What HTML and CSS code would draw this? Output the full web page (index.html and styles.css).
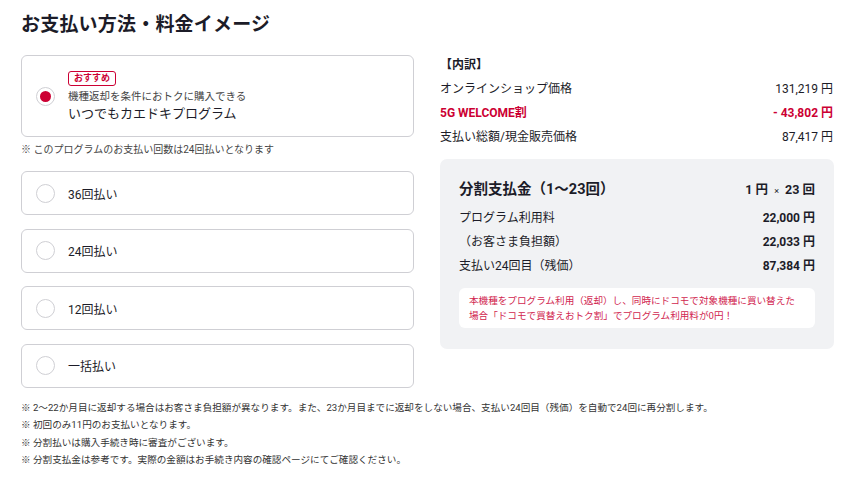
FILE: index.html
```html
<!DOCTYPE html>
<html lang="ja">
<head>
<meta charset="utf-8">
<link rel="stylesheet" href="styles.css">
</head>
<body>
<div class="page">
  <h1 class="title">お支払い方法・料金イメージ</h1>
  <div class="cols">
    <div class="left">
      <div class="card card-main">
        <span class="radio checked"></span>
        <div class="card-body">
          <span class="badge">おすすめ</span>
          <div class="sub">機種返却を条件におトクに購入できる</div>
          <div class="main-label">いつでもカエドキプログラム</div>
        </div>
      </div>
      <p class="note-small">※ このプログラムのお支払い回数は24回払いとなります</p>
      <div class="card card-opt"><span class="radio"></span><span class="opt-label">36回払い</span></div>
      <div class="card card-opt"><span class="radio"></span><span class="opt-label">24回払い</span></div>
      <div class="card card-opt"><span class="radio"></span><span class="opt-label">12回払い</span></div>
      <div class="card card-opt"><span class="radio"></span><span class="opt-label">一括払い</span></div>
    </div>
    <div class="right">
      <div class="breakdown-title">【内訳】</div>
      <div class="row"><span>オンラインショップ価格</span><span>131,219 円</span></div>
      <div class="row red"><span class="b">5G WELCOME割</span><span class="b">- 43,802 円</span></div>
      <div class="row"><span>支払い総額/現金販売価格</span><span>87,417 円</span></div>
      <div class="box">
        <div class="box-head"><span>分割支払金（1〜23回）</span><span class="per">1 円 <span class="x">×</span> 23 回</span></div>
        <div class="brow"><span>プログラム利用料</span><span class="b">22,000 円</span></div>
        <div class="brow"><span>（お客さま負担額）</span><span class="b">22,033 円</span></div>
        <div class="brow"><span>支払い24回目（残価）</span><span class="b">87,384 円</span></div>
        <div class="promo">本機種をプログラム利用（返却）し、同時にドコモで対象機種に買い替えた<br>場合「ドコモで買替えおトク割」でプログラム利用料が0円！</div>
      </div>
    </div>
  </div>
  <ul class="notes">
    <li>※ 2〜22か月目に返却する場合はお客さま負担額が異なります。また、23か月目までに返却をしない場合、支払い24回目（残価）を自動で24回に再分割します。</li>
    <li>※ 初回のみ11円のお支払いとなります。</li>
    <li>※ 分割払いは購入手続き時に審査がございます。</li>
    <li>※ 分割支払金は参考です。実際の金額はお手続き内容の確認ページにてご確認ください。</li>
  </ul>
</div>
</body>
</html>
```
FILE: styles.css
```css
* { box-sizing: border-box; }
body {
  margin: 0;
  background: #fff;
  color: #1c1c28;
  font-family: Roboto, "Noto Sans CJK JP", sans-serif;
}
.page { padding: 12px 21px 0 21px; width: 858px; }
.title {
  margin: 0;
  font-size: 19px;
  font-weight: 700;
  line-height: 26px;
  letter-spacing: 0.2px;
}
.cols {
  display: flex;
  gap: 26px;
  margin-top: 17px;
}
.left { width: 393px; }
.right { width: 394px; }
.card {
  border: 1px solid #cfcfd4;
  border-radius: 6px;
  display: flex;
  align-items: center;
  padding-left: 14px;
  background: #fff;
}
.card-main { height: 82px; }
.card-opt { height: 44px; margin-top: 13.5px; }
.note-small + .card-opt { margin-top: 13px; }
.radio {
  width: 19px;
  height: 19px;
  border-radius: 50%;
  border: 1px solid #cfcfd4;
  flex: none;
  display: flex;
  align-items: center;
  justify-content: center;
}
.radio.checked::after {
  content: "";
  width: 11px;
  height: 11px;
  border-radius: 50%;
  background: #cc0033;
}
.card-body { margin-left: 13px; display: flex; flex-direction: column; align-items: flex-start; margin-top: 2px; }
.badge {
  border: 1px solid #cc0033;
  border-radius: 3px;
  color: #cc0033;
  font-size: 9px;
  font-weight: 700;
  line-height: 13px;
  padding: 0 5px;
}
.sub { font-size: 10.5px; color: #444; line-height: 16px; margin-top: 3px; }
.main-label { font-size: 13px; line-height: 18px; }
.opt-label { font-size: 12px; margin-left: 13px; }
.note-small { margin: 5px 0 0; font-size: 10px; color: #444; line-height: 16px; }
.breakdown-title { font-size: 12px; font-weight: 700; line-height: 16px; margin-top: 2px; }
.row {
  display: flex;
  justify-content: space-between;
  font-size: 12px;
  line-height: 16px;
  margin-top: 8px;
}
.row:first-of-type { margin-top: 10px; }
.row.red { color: #cc0033; }
.b { font-weight: 700; }
.row span:last-child { padding-right: 1px; }
.box {
  margin-top: 14px;
  background: #f1f2f4;
  border-radius: 7px;
  padding: 21px 19px 21px 19px;
}
.box-head {
  display: flex;
  justify-content: space-between;
  align-items: baseline;
  font-weight: 700;
  font-size: 14.5px;
  line-height: 20px;
}
.per { font-size: 12.5px; }
.per .x { font-size: 9px; font-weight: 400; margin: 0 3px; }
.brow {
  display: flex;
  justify-content: space-between;
  font-size: 12px;
  line-height: 16px;
  margin-top: 8px;
}
.box-head + .brow { margin-top: 9px; }
.promo {
  margin-top: 14px;
  background: #fff;
  border-radius: 6px;
  padding: 5px 10px 5px;
  color: #d1264f;
  font-size: 9.6px;
  line-height: 15px;
}
.notes {
  list-style: none;
  margin: 11px 0 0;
  padding: 0;
  font-size: 9.6px;
  color: #333;
  line-height: 17.5px;
}
```
